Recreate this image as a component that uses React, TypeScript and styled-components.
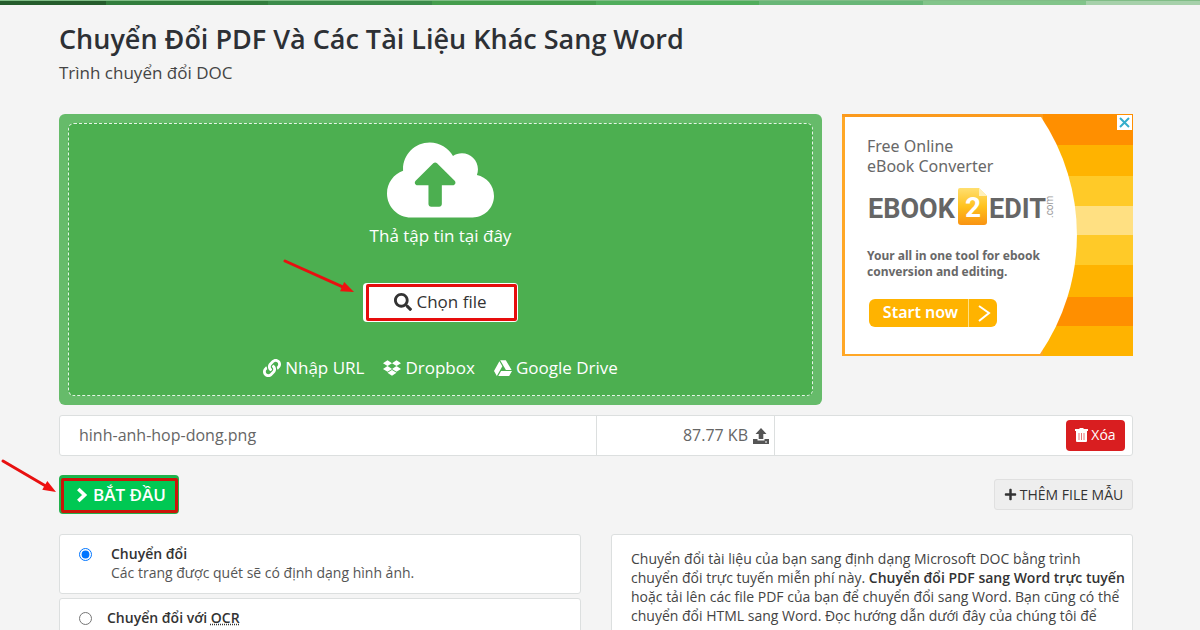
import React from "react";
import styled, { createGlobalStyle } from "styled-components";
import {
  FaCloudUploadAlt,
  FaDropbox,
  FaGoogleDrive,
  FaLink,
  FaPlus,
  FaSearch,
} from "react-icons/fa";

const GlobalStyle = createGlobalStyle`
  *, *::before, *::after { box-sizing: border-box; }
  body {
    margin: 0;
    background: #f4f4f4;
    color: #444;
    font-family: "Open Sans", "Noto Sans", sans-serif;
    font-size: 14px;
    line-height: 19px;
  }
  button { font-family: inherit; cursor: pointer; }
`;

const Page = styled.div`
  height: 100vh;
  overflow: hidden;
`;

const Stripe = styled.div`
  display: flex;
  height: 5px;
  border-top: 1px solid #80bd86;
`;

const StripePart = styled.span<{ $color: string; $grow: number }>`
  flex: ${(p) => p.$grow} 1 0;
  background: ${(p) => p.$color};
`;

const Container = styled.main`
  padding: 16px 67px 0 59px;
`;

const Title = styled.h1`
  margin: 0;
  font-size: 27px;
  line-height: 36px;
  font-weight: 600;
  color: #2d3035;
`;

const Subtitle = styled.h2`
  margin: 4px 0 29px;
  font-size: 17px;
  line-height: 24px;
  font-weight: 400;
  color: #444;
`;

const UploadArea = styled.section`
  display: grid;
  grid-template-columns: 1fr 291px;
  gap: 20px;
  align-items: start;
`;

const DropZone = styled.div`
  padding: 9px;
  border-radius: 6px;
  background: #66bb6a;
`;

const DropInner = styled.div`
  display: flex;
  flex-direction: column;
  align-items: center;
  height: 273px;
  padding-top: 13px;
  border: 1px dashed #e6f5e7;
  border-radius: 6px;
  background: #4caf50;
  color: #fff;
`;

const CloudIcon = styled(FaCloudUploadAlt)`
  width: 107px;
  height: 86px;
`;

const DropText = styled.p`
  margin: 0 0 34px;
  font-size: 17px;
  line-height: 26px;
`;

const ChooseButton = styled.button`
  position: relative;
  display: flex;
  align-items: center;
  justify-content: center;
  gap: 4px;
  width: 155px;
  height: 39px;
  padding: 0 0 2px;
  border: 0;
  border-radius: 4px;
  background: #fff;
  color: #333;
  font-size: 17px;
  line-height: 24px;
  font-weight: 500;
`;

const Highlight = styled.span<{ $color: string; $inset: string }>`
  position: absolute;
  inset: ${(p) => p.$inset};
  border: 3px solid ${(p) => p.$color};
  border-radius: 2px;
`;

const ArrowSvg = styled.svg<{ $left: number; $top: number }>`
  position: absolute;
  left: ${(p) => p.$left}px;
  top: ${(p) => p.$top}px;
  overflow: visible;
`;

const SourceList = styled.nav`
  display: flex;
  gap: 19px;
  margin-top: 34px;
`;

const SourceLink = styled.a`
  display: flex;
  align-items: center;
  gap: 4px;
  color: #fff;
  font-size: 17px;
  line-height: 24px;
  text-decoration: none;
  svg { width: 18px; height: 18px; }
`;

const Ad = styled.aside`
  position: relative;
  height: 242px;
  padding: 22px 0 0 25px;
  color: #686868;
  font-family: "Noto Sans", sans-serif;
`;

const AdArt = styled.svg`
  position: absolute;
  inset: 0;
`;

const AdBody = styled.div`
  position: relative;
`;

const AdLead = styled.p`
  margin: 0;
  font-size: 16px;
  line-height: 20px;
`;

const AdLogo = styled.svg`
  display: block;
  margin: 12px 0 22px;
  overflow: visible;
`;

const AdNote = styled.p`
  margin: 0;
  font-size: 12px;
  line-height: 16px;
  font-weight: 700;
`;

const AdButton = styled.a`
  display: flex;
  width: 128px;
  height: 28px;
  margin: 19px 0 0 2px;
  border-radius: 6px;
  background: #ffb300;
  color: #fff;
  font-size: 16px;
  line-height: 27px;
  font-weight: 600;
  text-decoration: none;
`;

const AdButtonText = styled.span`
  flex: 1;
  padding-left: 4px;
  text-align: center;
  border-right: 1px solid #ffe082;
`;

const AdClose = styled.button`
  position: absolute;
  top: 1px;
  right: 1px;
  display: flex;
  width: 15px;
  height: 15px;
  padding: 2px;
  border: 0;
  background: #fff;
`;

const FileTable = styled.table`
  width: 100%;
  height: 41px;
  margin-top: 10px;
  table-layout: fixed;
  border: 1px solid #dcdfdf;
  border-radius: 3px;
  border-spacing: 0;
  background: #fff;
  color: #666;
  font-size: 16px;
`;

const FileCell = styled.td<{ $width?: string; $right?: boolean; $pad: string }>`
  width: ${(p) => p.$width ?? "auto"};
  padding: ${(p) => p.$pad};
  text-align: ${(p) => (p.$right ? "right" : "left")};
  & + & { border-left: 1px solid #dcdfdf; }
`;

const FileSize = styled.span`
  display: flex;
  align-items: center;
  justify-content: flex-end;
  gap: 5px;
`;

const DeleteButton = styled.button`
  display: inline-flex;
  align-items: center;
  justify-content: center;
  gap: 3px;
  width: 59px;
  height: 31px;
  padding: 0 0 2px;
  border: 0;
  border-radius: 4px;
  background: #d91e20;
  color: #fff;
  font-size: 14px;
  vertical-align: middle;
`;

const ActionBar = styled.div`
  display: flex;
  align-items: center;
  justify-content: space-between;
  margin-top: 19px;
`;

const StartButton = styled.button`
  position: relative;
  display: flex;
  align-items: center;
  justify-content: center;
  gap: 5px;
  width: 120px;
  height: 39px;
  padding: 0 0 0 4px;
  border: 2px solid #22b14c;
  border-radius: 4px;
  background: #00c853;
  color: #fff;
  font-size: 17px;
  line-height: 24px;
  font-weight: 600;
`;

const SampleButton = styled.button`
  display: flex;
  align-items: center;
  justify-content: center;
  gap: 3px;
  width: 139px;
  height: 31px;
  padding: 0;
  border: 1px solid #e0e0e0;
  border-radius: 3px;
  background: #eee;
  color: #333;
  font-size: 14px;
`;

const Columns = styled.section`
  display: grid;
  grid-template-columns: 1fr 1fr;
  gap: 30px;
  align-items: start;
  margin-top: 20px;
`;

const OptionList = styled.div`
  display: grid;
  gap: 4px;
`;

const Panel = styled.div`
  border: 1px solid #dcdfdf;
  border-radius: 3px;
  background: #fff;
`;

const Option = styled(Panel)<{ $gap: number }>`
  display: flex;
  gap: ${(p) => p.$gap}px;
  height: 60px;
  padding: 9px 19px;
`;

const Radio = styled.input`
  flex: none;
  width: 13px;
  height: 13px;
  margin: 4px 0 0;
`;

const OptionText = styled.label`
  color: #555;
`;

const Strong = styled.strong`
  font-weight: 600;
  color: #333;
`;

const Ocr = styled.abbr`
  text-decoration: underline dotted;
`;

const Description = styled(Panel)`
  padding: 14px 0 14px 19px;
  color: #444;
`;

const stripes: [string, number][] = [
  ["#255c2c", 106],
  ["#327d3d", 162],
  ["#3b8b4a", 164],
  ["#459d4d", 164],
  ["#50ad5c", 163],
  ["#68b677", 164],
  ["#82c48a", 163],
  ["#a6d0aa", 114],
];

const adBands: [string, number, number][] = [
  ["#ff8f00", 0, 31],
  ["#ffb300", 31, 31],
  ["#ffca28", 62, 30],
  ["#ffe082", 92, 29],
  ["#ffca28", 121, 30],
  ["#ffb300", 151, 32],
  ["#ff8f00", 183, 29],
  ["#ffb300", 212, 30],
];

function Arrow({ left, top, dx, dy }: { left: number; top: number; dx: number; dy: number }) {
  const length = Math.hypot(dx, dy);
  const angle = (Math.atan2(dy, dx) * 180) / Math.PI;
  return (
    <ArrowSvg $left={left} $top={top} width={dx} height={dy} aria-hidden="true">
      <g transform={`rotate(${angle})`} fill="#f01010">
        <path d={`M0 0H${length - 10}`} stroke="#e81010" strokeWidth="3" strokeLinecap="round" />
        <path d={`M${length} 0L${length - 13} -5V5Z`} />
      </g>
    </ArrowSvg>
  );
}

function ChevronGlyph() {
  return (
    <svg width="12" height="16" viewBox="0 0 12 16" fill="none" stroke="#fff" strokeWidth="3.6" aria-hidden="true">
      <path d="M2.3 2L8.6 8L2.3 14" />
    </svg>
  );
}

function UploadGlyph() {
  return (
    <svg width="16" height="16" viewBox="0 0 16 16" fill="#555" aria-hidden="true">
      <path d="M8 0L13.5 6H10.3V11H5.7V6H2.5ZM0 11H4.5V12.5H11.5V11H16V16H0ZM12 13.5V14.5H14V13.5Z" fillRule="evenodd" />
    </svg>
  );
}

function TrashGlyph() {
  return (
    <svg width="13" height="14" viewBox="0 0 13 14" aria-hidden="true">
      <path d="M4.5 0H8.5V1H13V3H0V1H4.5ZM1 3H12V13Q12 14 11 14H2Q1 14 1 13Z" fill="#fff" />
      <path d="M4 5V12M6.5 5V12M9 5V12" stroke="#e67677" />
    </svg>
  );
}

function Banner() {
  return (
    <Ad>
      <AdArt width="291" height="242" viewBox="0 0 291 242" aria-hidden="true">
        {adBands.map(([color, y, height]) => (
          <rect key={y} x="150" y={y} width="141" height={height} fill={color} />
        ))}
        <path d="M0 0H201V242H0Z" fill="#ffa726" />
        <path d="M0 0H201V3H0Z" fill="#fb9a1c" />
        <path d="M3 3H199A211 211 0 0 1 198 240H3Z" fill="#fff" />
      </AdArt>
      <AdBody>
        <AdLead>
          Free Online
          <br />
          eBook Converter
        </AdLead>
        <AdLogo width="190" height="38" viewBox="0 0 190 38" role="img" aria-label="EBOOK2EDIT.com">
          <defs>
            <linearGradient id="sheet" x1="0" y1="0" x2="0" y2="1">
              <stop offset="0" stopColor="#ffdf70" />
              <stop offset="0.5" stopColor="#ffc21e" />
              <stop offset="1" stopColor="#f99312" />
            </linearGradient>
          </defs>
          <g fontFamily="Roboto, sans-serif" fontWeight="700" fontSize="27" fill="#666">
            <text x="1" y="30">EBOOK</text>
            <text x="122" y="30">EDIT</text>
          </g>
          <path d="M93 0H112L120 8V34Q120 37 117 37H94Q91 37 91 34V2Q91 0 93 0Z" fill="url(#sheet)" />
          <path d="M112 0L120 8H112Z" fill="#fff0ba" />
          <text x="98" y="29" fontFamily="Roboto, sans-serif" fontWeight="700" fontSize="28" fill="#fff">2</text>
          <text transform="translate(186 30) rotate(-90)" fontFamily="Roboto, sans-serif" fontSize="10" fill="#999">.com</text>
        </AdLogo>
        <AdNote>
          Your all in one tool for ebook
          <br />
          conversion and editing.
        </AdNote>
        <AdButton href="#start">
          <AdButtonText>Start now</AdButtonText>
          <svg width="28" height="28" viewBox="0 0 28 28" fill="none" stroke="#fff" strokeWidth="2" aria-hidden="true">
            <path d="M10 7L20 14L10 22" />
          </svg>
        </AdButton>
      </AdBody>
      <AdClose aria-label="Close ad">
        <svg width="11" height="11" viewBox="0 0 11 11" stroke="#35aecb" strokeWidth="2" aria-hidden="true">
          <path d="M1 1L10 10M10 1L1 10" />
        </svg>
      </AdClose>
    </Ad>
  );
}

export default function App() {
  return (
    <Page>
      <GlobalStyle />
      <Stripe>
        {stripes.map(([color, grow]) => (
          <StripePart key={color} $color={color} $grow={grow} />
        ))}
      </Stripe>
      <Container>
        <Title>Chuyển Đổi PDF Và Các Tài Liệu Khác Sang Word</Title>
        <Subtitle>Trình chuyển đổi DOC</Subtitle>
        <UploadArea>
          <DropZone>
            <DropInner>
              <CloudIcon aria-hidden="true" />
              <DropText>Thả tập tin tại đây</DropText>
              <ChooseButton type="button">
                <FaSearch size={18} aria-hidden="true" />
                Chọn file
                <Highlight $color="#e60d0d" $inset="1px 1px 1px 3px" />
                <Arrow left={-78} top={-22} dx={69} dy={31} />
              </ChooseButton>
              <SourceList>
                <SourceLink href="#url"><FaLink aria-hidden="true" />Nhập URL</SourceLink>
                <SourceLink href="#dropbox"><FaDropbox aria-hidden="true" />Dropbox</SourceLink>
                <SourceLink href="#drive"><FaGoogleDrive aria-hidden="true" />Google Drive</SourceLink>
              </SourceList>
            </DropInner>
          </DropZone>
          <Banner />
        </UploadArea>
        <FileTable>
          <tbody>
            <tr>
              <FileCell $width="50%" $pad="0 19px">hinh-anh-hop-dong.png</FileCell>
              <FileCell $width="178px" $pad="0 5px" $right>
                <FileSize>87.77 KB <UploadGlyph /></FileSize>
              </FileCell>
              <FileCell $pad="0 7px" $right>
                <DeleteButton type="button"><TrashGlyph />Xóa</DeleteButton>
              </FileCell>
            </tr>
          </tbody>
        </FileTable>
        <ActionBar>
          <StartButton type="button">
            <ChevronGlyph />
            BẮT ĐẦU
            <Highlight $color="#cc1509" $inset="1px -1px -1px 0" />
            <Arrow left={-58} top={-16} dx={53} dy={31} />
          </StartButton>
          <SampleButton type="button"><FaPlus size={13} aria-hidden="true" />THÊM FILE MẪU</SampleButton>
        </ActionBar>
        <Columns>
          <OptionList>
            <Option $gap={19}>
              <Radio type="radio" name="mode" id="mode-plain" defaultChecked />
              <OptionText htmlFor="mode-plain">
                <Strong>Chuyển đổi</Strong>
                <br />
                Các trang được quét sẽ có định dạng hình ảnh.
              </OptionText>
            </Option>
            <Option $gap={15}>
              <Radio type="radio" name="mode" id="mode-ocr" />
              <OptionText htmlFor="mode-ocr">
                <Strong>Chuyển đổi với <Ocr>OCR</Ocr></Strong>
              </OptionText>
            </Option>
          </OptionList>
          <Description>
            Chuyển đổi tài liệu của bạn sang định dạng Microsoft DOC bằng trình
            <br />
            chuyển đổi trực tuyến miễn phí này. <Strong>Chuyển đổi PDF sang Word trực tuyến</Strong>
            <br />
            hoặc tải lên các file PDF của bạn để chuyển đổi sang Word. Bạn cũng có thể
            <br />
            chuyển đổi HTML sang Word. Đọc hướng dẫn dưới đây của chúng tôi để
          </Description>
        </Columns>
      </Container>
    </Page>
  );
}
